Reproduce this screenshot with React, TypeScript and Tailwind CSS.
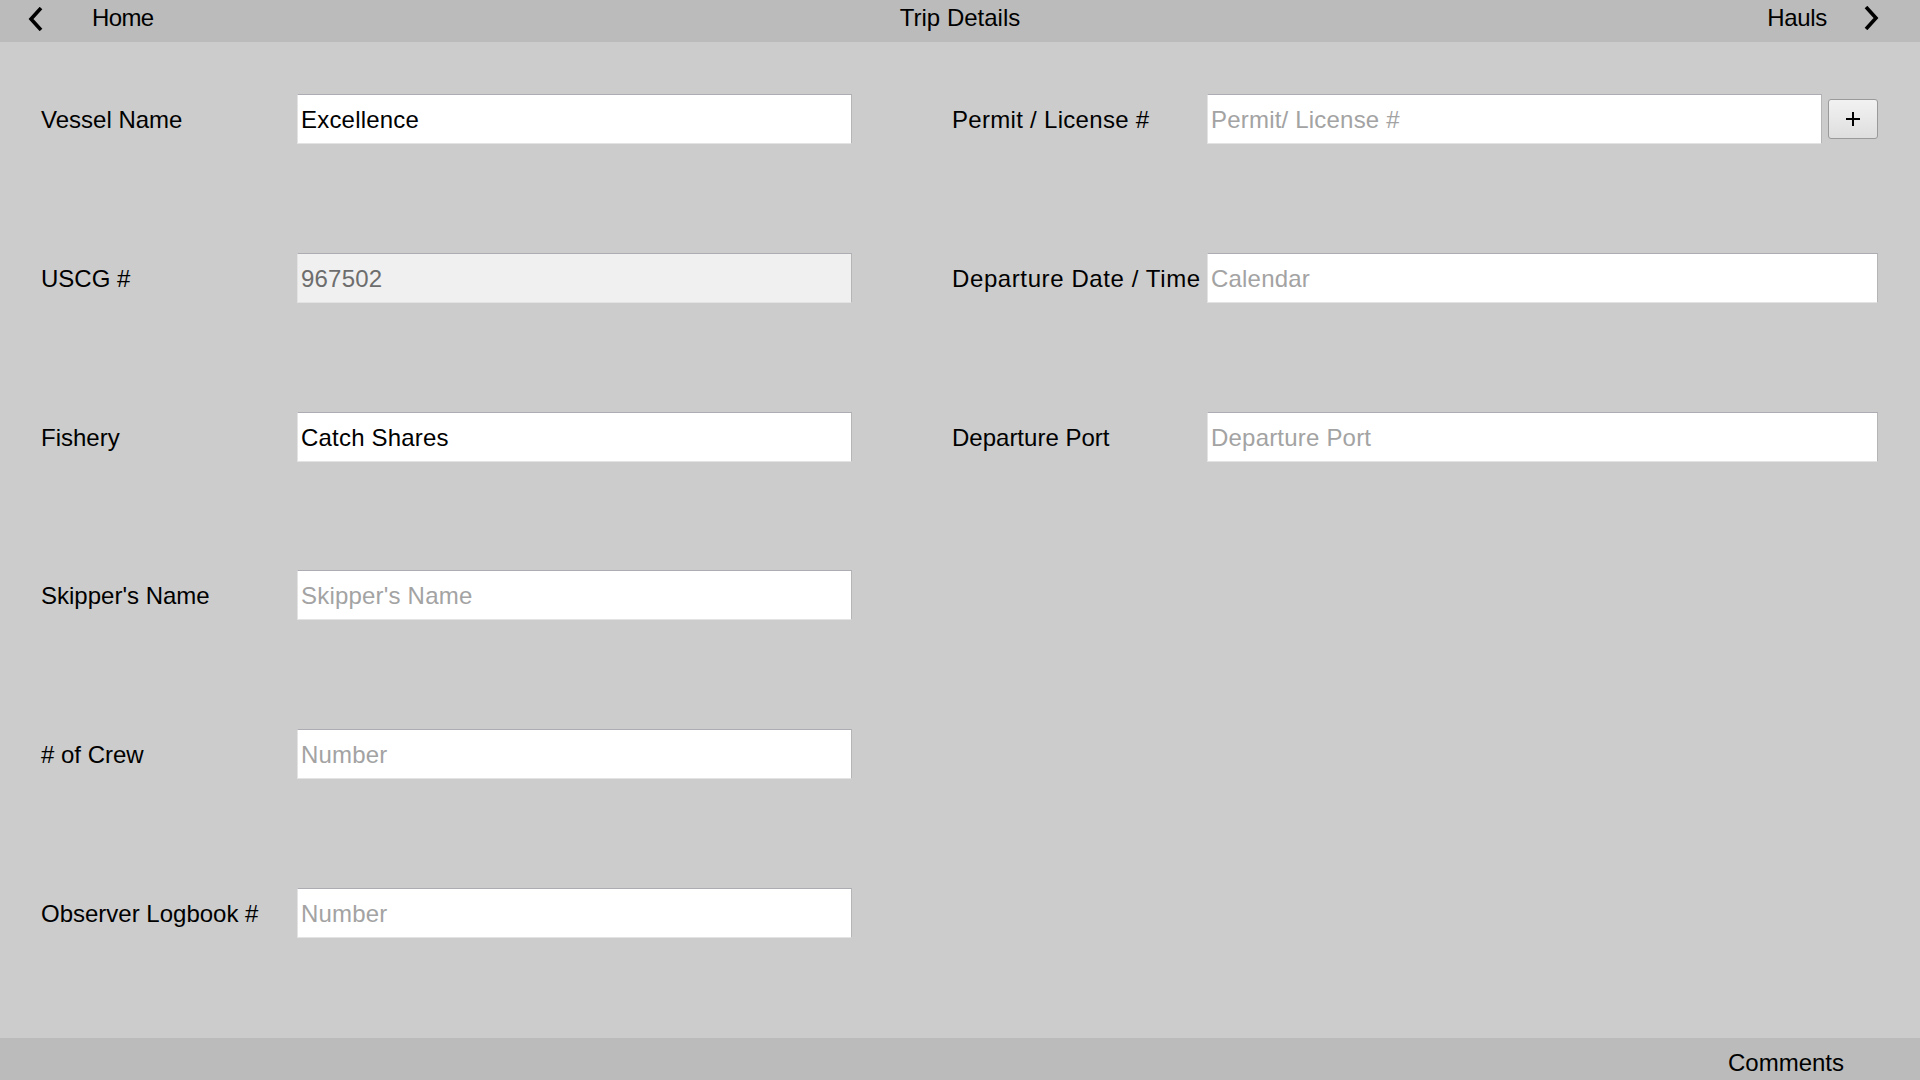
import React from "react";

const font = { fontFamily: '"Liberation Sans", Arial, sans-serif' };

function Chevron({ dir }: { dir: "left" | "right" }) {
  return (
    <svg width="18" height="24" viewBox="0 0 18 24" className="block">
      <polyline
        points={dir === "left" ? "14,1 4,12 14,23" : "4,1 14,12 4,23"}
        fill="none"
        stroke="#000"
        strokeWidth="3.6"
        strokeLinejoin="miter"
      />
    </svg>
  );
}

function TextBox({
  value,
  placeholder,
  disabled,
  width,
}: {
  value?: string;
  placeholder?: string;
  disabled?: boolean;
  width: string;
}) {
  return (
    <input
      readOnly
      defaultValue={value}
      placeholder={placeholder}
      className={
        (disabled ? "bg-[#f0f0f0] text-[#6d6d6d] " : "bg-white text-black ") +
        width +
        " h-[50px] border-t border-t-[#abadb3] border-r border-r-[#b5b5b5] border-l border-l-[#e3e3e3] border-b border-b-[#e3e3e3] pl-[3px] pt-[2px] text-[24px] tracking-[0.2px] outline-none placeholder:text-[#a3a3a3]"
      }
      style={font}
    />
  );
}

function Row({ label, children }: { label: string; children: React.ReactNode }) {
  return (
    <div className="flex h-[50px] items-center">
      <div className="w-[256px] shrink-0 whitespace-nowrap pt-[2px] text-[24px] text-black">{label}</div>
      {children}
    </div>
  );
}

export default function App() {
  return (
    <div className="flex h-[1080px] w-[1920px] flex-col overflow-hidden bg-[#cccccc]" style={font}>
      <header className="grid h-[42px] shrink-0 grid-cols-3 bg-[#bbbbbb] text-[24px] leading-[35px] text-black">
        <div className="flex items-start">
          <div className="ml-[27px] mt-[7px]">
            <Chevron dir="left" />
          </div>
          <span className="ml-[47px] tracking-[-0.6px]">Home</span>
        </div>
        <div className="text-center">Trip Details</div>
        <div className="flex items-start justify-end">
          <span className="tracking-[-0.3px]">Hauls</span>
          <div className="ml-[35px] mr-[40px] mt-[6px]">
            <Chevron dir="right" />
          </div>
        </div>
      </header>

      <main className="flex flex-1 pl-[41px] pt-[52px]">
        <div className="flex w-[811px] flex-col gap-[108.75px]">
          <Row label="Vessel Name">
            <TextBox width="w-[555px]" value="Excellence" />
          </Row>
          <Row label="USCG #">
            <TextBox width="w-[555px]" value="967502" disabled />
          </Row>
          <Row label="Fishery">
            <TextBox width="w-[555px]" value="Catch Shares" />
          </Row>
          <Row label="Skipper's Name">
            <TextBox width="w-[555px]" placeholder="Skipper's Name" />
          </Row>
          <Row label="# of Crew">
            <TextBox width="w-[555px]" placeholder="Number" />
          </Row>
          <Row label="Observer Logbook #">
            <TextBox width="w-[555px]" placeholder="Number" />
          </Row>
        </div>
        <div className="ml-[100px] flex flex-col gap-[108.75px]">
          <div className="flex h-[50px] items-center">
            <div className="w-[255px] shrink-0 whitespace-nowrap pt-[2px] text-[24px] tracking-[0.3px] text-black">Permit / License #</div>
            <TextBox width="w-[615px]" placeholder="Permit/ License #" />
            <button className="ml-[6px] flex h-[40px] w-[50px] items-center justify-center rounded-[3px] border border-[#9a9a9a] bg-gradient-to-b from-[#f2f2f2] to-[#dedede]">
              <svg width="16" height="16" viewBox="0 0 16 16" className="block">
                <path d="M8 1V15M1 8H15" stroke="#000" strokeWidth="2" fill="none" />
              </svg>
            </button>
          </div>
          <div className="flex h-[50px] items-center">
            <div className="w-[255px] shrink-0 whitespace-nowrap pt-[2px] text-[24px] tracking-[0.6px] text-black">Departure Date / Time</div>
            <TextBox width="w-[671px]" placeholder="Calendar" />
          </div>
          <div className="flex h-[50px] items-center">
            <div className="w-[255px] shrink-0 whitespace-nowrap pt-[2px] text-[24px] text-black">Departure Port</div>
            <TextBox width="w-[671px]" placeholder="Departure Port" />
          </div>
        </div>
      </main>

      <footer className="flex h-[42px] shrink-0 items-start justify-end bg-[#bbbbbb] pr-[76px] pt-[13px] text-[24px] leading-none text-black">
        Comments
      </footer>
    </div>
  );
}
